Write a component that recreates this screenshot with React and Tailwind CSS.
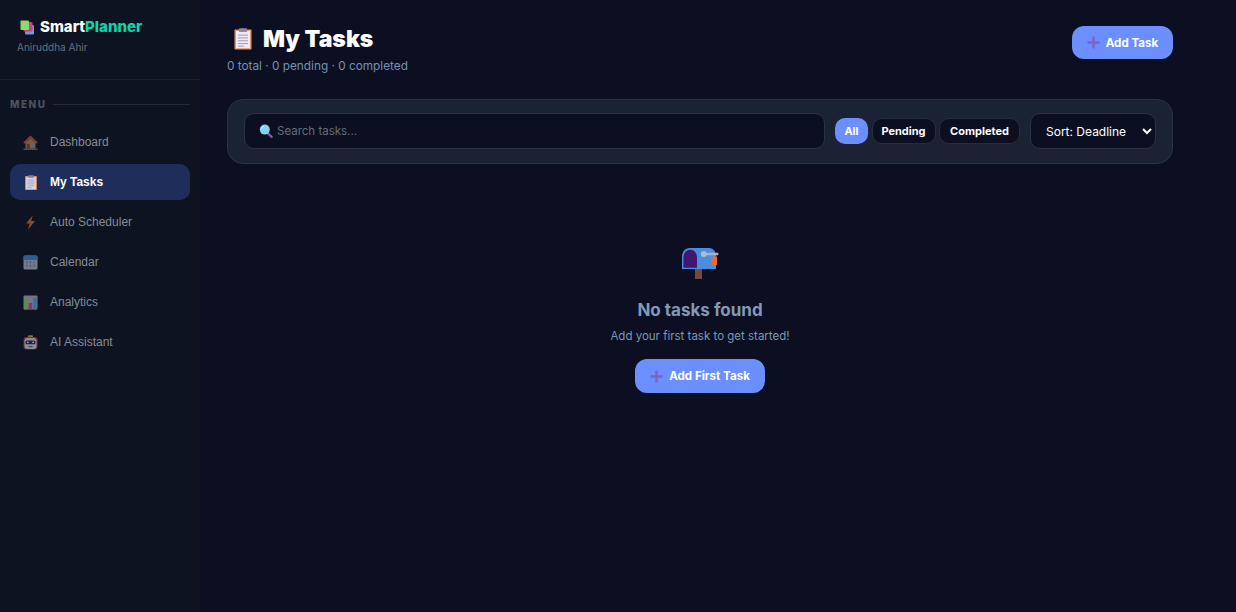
const BODY = { fontFamily: '"Inter", sans-serif' };
const HEAD = { fontFamily: '"Inter", sans-serif' };

const LogoIcon = () => (
  <svg width="15" height="15" viewBox="0 0 15 15">
    <rect x="5" y="5" width="9" height="9.5" rx="1" fill="#6d9be0" />
    <rect x="3.5" y="2" width="9" height="9.5" rx="1" fill="#c9407f" />
    <rect x="0.5" y="0.5" width="8.5" height="9.5" rx="1" fill="#93d56f" />
  </svg>
);

const House = () => (
  <svg width="15" height="15" viewBox="0 0 15 15">
    <rect x="0.5" y="13.6" width="14" height="1.2" fill="#3fa565" />
    <rect x="2.5" y="7" width="10" height="6.6" fill="#b07a55" />
    <path d="M7.5 0.6 L14.8 7.6 L13.4 8.8 L7.5 3.2 L1.6 8.8 L0.2 7.6 Z" fill="#c04e33" />
    <path d="M7.5 3.2 L2.5 8 H12.5 Z" fill="#b07a55" />
    <rect x="3.8" y="8.8" width="2.8" height="4.8" fill="#6a4636" />
    <rect x="8.3" y="8.6" width="3.2" height="2.8" fill="#4a9bd0" />
  </svg>
);

const Clipboard = ({ size = 14 }) => (
  <svg width={size} height={size * 1.1} viewBox="0 0 20 22">
    <rect x="1.5" y="1.5" width="17" height="20" rx="0.8" fill="#e09a62" />
    <rect x="3" y="3" width="14" height="17.2" fill="#efe8f6" />
    <rect x="6" y="0.3" width="8" height="3.7" rx="0.8" fill="#8d8a9a" />
    <rect x="5" y="6.6" width="10" height="1.1" fill="#aaa6b8" />
    <rect x="5" y="9.4" width="10" height="1.1" fill="#aaa6b8" />
    <rect x="5" y="12.2" width="10" height="1.1" fill="#aaa6b8" />
    <rect x="5" y="15" width="10" height="1.1" fill="#aaa6b8" />
    <rect x="5" y="17.6" width="6" height="1.1" fill="#aaa6b8" />
  </svg>
);

const Bolt = () => (
  <svg width="15" height="15" viewBox="0 0 15 15">
    <path d="M9.8 0.2 L3 8.6 H6.6 L5 14.8 L12 6 H8.2 Z" fill="#c4602f" />
  </svg>
);

const Calendar = () => (
  <svg width="15" height="15" viewBox="0 0 15 15">
    <rect x="0.5" y="0.5" width="14" height="14" rx="1.5" fill="#a3a3ba" />
    <path d="M0.5 5 V2 a1.5 1.5 0 0 1 1.5 -1.5 H13 a1.5 1.5 0 0 1 1.5 1.5 V5 Z" fill="#3480cf" />
    <g fill="#70718c">
      <rect x="3" y="6.5" width="1.6" height="1.6" />
      <rect x="6.7" y="6.5" width="1.6" height="1.6" />
      <rect x="10.4" y="6.5" width="1.6" height="1.6" fill="#4a9bd0" />
      <rect x="3" y="9.8" width="1.6" height="1.6" />
      <rect x="6.7" y="9.8" width="1.6" height="1.6" />
      <rect x="10.4" y="9.8" width="1.6" height="1.6" />
    </g>
  </svg>
);

const Chart = () => (
  <svg width="15" height="15" viewBox="0 0 15 15">
    <rect x="0.5" y="0.5" width="14" height="14" rx="1" fill="#a0a0b0" />
    <rect x="1" y="5" width="3.5" height="9.5" fill="#82bf68" />
    <rect x="5.6" y="8" width="3.5" height="6.5" fill="#cc4484" />
    <rect x="10.2" y="2.5" width="3.5" height="12" fill="#4a9bd0" />
  </svg>
);

const Robot = () => (
  <svg width="15" height="15" viewBox="0 0 15 15">
    <rect x="5" y="0.3" width="5" height="2.7" rx="1" fill="#c49c36" />
    <rect x="0.5" y="2" width="14" height="12.5" rx="3" fill="#a8365c" />
    <rect x="1.5" y="3" width="12" height="11" rx="3" fill="#c0c0cf" />
    <rect x="2.5" y="5.5" width="10" height="3.8" rx="1.5" fill="#2a2c44" />
    <rect x="4" y="6.7" width="1.6" height="1.4" fill="#e6e9f2" />
    <rect x="9.4" y="6.7" width="1.6" height="1.4" fill="#e6e9f2" />
    <rect x="5.5" y="11" width="4" height="1.2" fill="#63647a" />
  </svg>
);

const Magnifier = () => (
  <svg width="14" height="14" viewBox="0 0 14 14">
    <path d="M8.5 8.8 L12.6 12.8" stroke="#8d4f9e" strokeWidth="2.4" strokeLinecap="round" />
    <circle cx="5.8" cy="5.6" r="5" fill="#7fd6ef" />
    <path d="M2.3 5 a3.6 3.6 0 0 1 2.8 -2.9" stroke="#c5eefa" strokeWidth="1" fill="none" />
  </svg>
);

const PlusIcon = () => (
  <svg width="13" height="13" viewBox="0 0 13 13">
    <path d="M5.3 0.5 H7.7 V5.3 H12.5 V7.7 H7.7 V12.5 H5.3 V7.7 H0.5 V5.3 H5.3 Z" fill="#7e63c0" />
  </svg>
);

const Mailbox = () => (
  <svg width="38" height="32" viewBox="0 0 38 32">
    <rect x="14" y="21" width="7" height="11" fill="#74483f" />
    <path d="M1 22 V10 C1 4 4.5 1 10 1 H27 C32 1 35 4 35 10 V22 Z" fill="#4a8fdf" />
    <path d="M2.4 20.8 V10.5 C2.4 6 5.5 2.8 9.2 2.8 C13 2.8 16 6 16 10.5 V20.8 Z" fill="#3f1670" />
    <rect x="30" y="9.5" width="6" height="8.5" fill="#ee6a2c" />
    <rect x="21" y="5.8" width="16.5" height="2.4" rx="1.2" fill="#adb2c4" />
    <circle cx="22.8" cy="7" r="3" fill="#b4b8ca" />
  </svg>
);

const navItems = [
  { label: 'Dashboard', icon: <House /> },
  { label: 'My Tasks', icon: <Clipboard />, active: true },
  { label: 'Auto Scheduler', icon: <Bolt /> },
  { label: 'Calendar', icon: <Calendar /> },
  { label: 'Analytics', icon: <Chart /> },
  { label: 'AI Assistant', icon: <Robot /> },
];

const Sidebar = () => (
  <aside className="w-[200px] shrink-0 h-[612px] bg-[#0d1321] flex flex-col" style={{ fontFamily: '"Liberation Sans", sans-serif' }}>
    <div className="h-[80px] shrink-0 border-b border-[#1b2130] pl-[20px] pt-[19px]">
      <div className="flex items-center gap-[5px] h-[16px]">
        <LogoIcon />
        <span className="pb-[2px] text-[15px] font-extrabold leading-none text-white" style={HEAD}>
          Smart<span className="text-[#0bd6a8]">Planner</span>
        </span>
      </div>
      <p className="mt-[4px] ml-[-3px] text-[10px] leading-[16px] text-[#6a707c]" style={BODY}>Aniruddha Ahir</p>
    </div>

    <div className="px-[10px] pt-[16px]">
      <div className="flex items-center gap-[7px] h-[16px] mb-[12px]">
        <span className="text-[10px] font-extrabold tracking-[1.5px] text-[#4d5360]" style={HEAD}>MENU</span>
        <div className="flex-1 h-px bg-[#252b39]" />
      </div>
      <nav className="flex flex-col gap-[4px]">
        {navItems.map((item) => (
          <div
            key={item.label}
            className={`h-[36px] rounded-[10px] flex items-center pl-[13px] gap-[12px] text-[12px] ${
              item.active ? 'bg-[#1e2d5a] text-white font-bold' : 'text-[#868c98]'
            }`}
          >
            <span className={`w-[15px] h-[15px] flex justify-center ${item.active ? 'opacity-90' : 'opacity-70'}`}>{item.icon}</span>
            {item.label}
          </div>
        ))}
      </nav>
    </div>
  </aside>
);

const PrimaryButton = ({ children, className }) => (
  <button className={`flex items-center justify-center gap-[6px] rounded-[12px] bg-[#6b8fff] text-white text-[11.6px] font-bold ${className}`} style={BODY}>
    <PlusIcon />
    <span className="pt-[2px]">{children}</span>
  </button>
);

const Pill = ({ children, active, className }) => (
  <button
    className={`h-[26px] rounded-[10px] text-[11px] font-bold text-white ${className} ${
      active ? 'bg-[#6b8fff]' : 'bg-[#0b0f21] border border-[#252d3f]'
    }`}
    style={BODY}
  >
    {children}
  </button>
);

export default function App() {
  return (
    <div className="flex w-[1236px] h-[612px] overflow-hidden bg-[#0b0f21]">
      <Sidebar />
      <main className="flex-1 pl-[27px] pr-[63px]" style={BODY}>
        <header className="flex justify-between items-start pt-[26px] h-[99px]">
          <div>
            <div className="flex items-center gap-[10px] h-[26px]">
              <span className="ml-[6px] flex"><Clipboard size={20} /></span>
              <h1 className="text-[23px] font-black leading-none text-white" style={HEAD}>My Tasks</h1>
            </div>
            <p className="mt-[6px] text-[11.8px] leading-[16px] text-[#7393b5]">0 total · 0 pending · 0 completed</p>
          </div>
          <PrimaryButton className="w-[101px] h-[33px]">Add Task</PrimaryButton>
        </header>

        <section className="h-[65px] rounded-[16px] bg-[#1a2233] border border-[#2a3346] flex items-center gap-[10px] px-[16px] pb-px">
          <div className="flex-1 h-[36px] rounded-[10px] bg-[#0b0f21] border border-[#2a3346] flex items-center gap-[4px] pl-[14px]">
            <Magnifier />
            <input
              placeholder="Search tasks..."
              className="flex-1 bg-transparent outline-none pt-[2px] text-[11.5px] text-white placeholder:text-[#666c78]"
            />
          </div>
          <div className="flex items-center gap-[3.5px]">
            <Pill active className="w-[33px]">All</Pill>
            <Pill className="w-[64px]">Pending</Pill>
            <Pill className="w-[81px]">Completed</Pill>
          </div>
          <select className="w-[126px] h-[36px] rounded-[10px] bg-[#0b0f21] border border-[#2a3346] pl-[11px] text-[12px] text-white outline-none">
            <option>Sort: Deadline</option>
          </select>
        </section>

        <section className="flex flex-col items-center pt-[83px]">
          <Mailbox />
          <h2 className="mt-[18px] text-[17px] font-bold leading-[26px] text-[#8299b8]" style={HEAD}>No tasks found</h2>
          <p className="mt-[4px] text-[11.5px] leading-[18px] text-[#7c98b6]">Add your first task to get started!</p>
          <PrimaryButton className="mt-[14px] w-[130px] h-[34px]">Add First Task</PrimaryButton>
        </section>
      </main>
    </div>
  );
}
